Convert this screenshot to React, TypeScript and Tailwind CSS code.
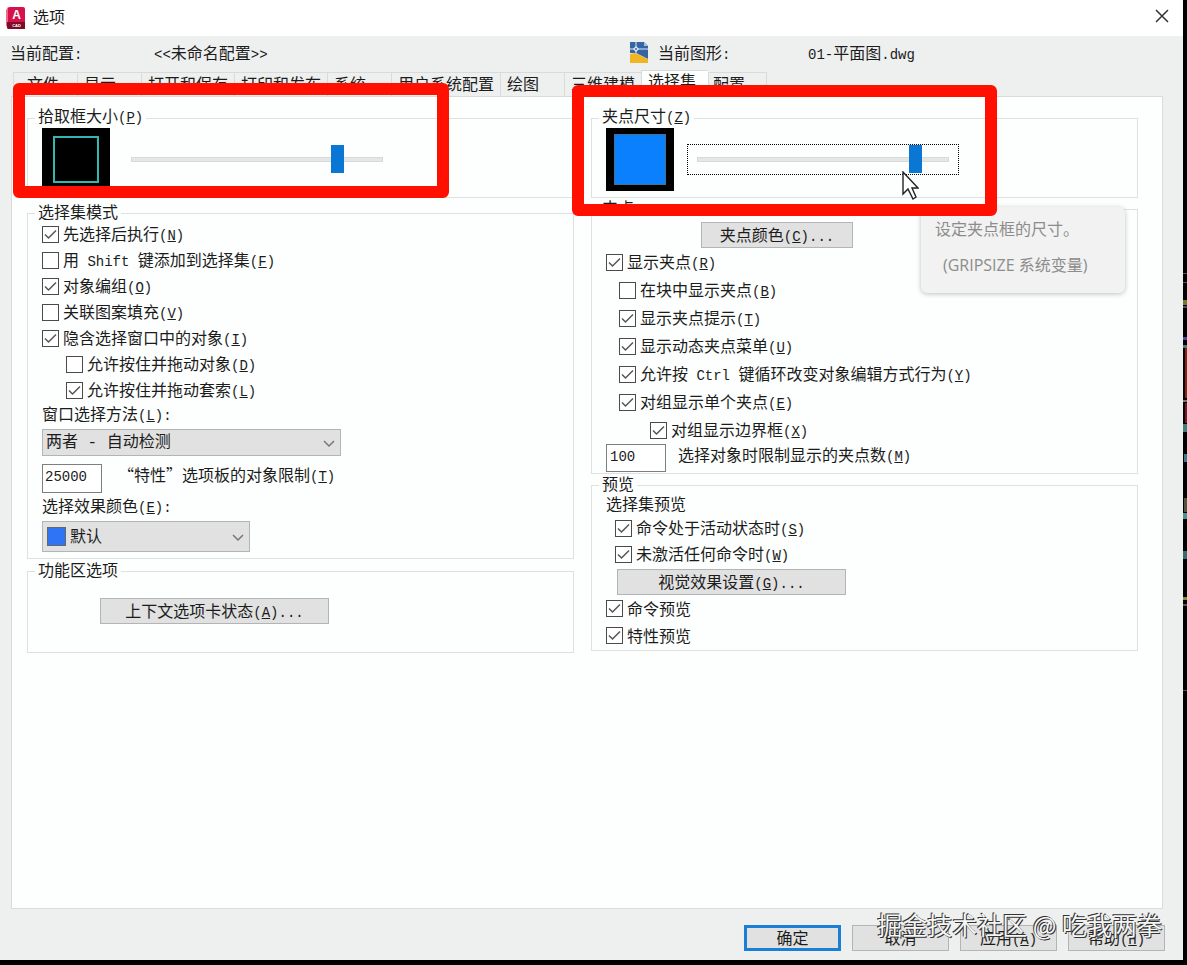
import React, { useState } from 'react'
import { clsx } from 'clsx'

const tabs = [
  '文件',
  '显示',
  '打开和保存',
  '打印和发布',
  '系统',
  '用户系统配置',
  '绘图',
  '三维建模',
  '选择集',
  '配置'
]

interface CheckItem {
  label: string
  checked: boolean
  indent?: string
}

const selectionModes: CheckItem[] = [
  { label: '先选择后执行(&N)', checked: true },
  { label: '用 Shift 键添加到选择集(&F)', checked: false },
  { label: '对象编组(&O)', checked: true },
  { label: '关联图案填充(&V)', checked: false },
  { label: '隐含选择窗口中的对象(&I)', checked: true },
  { label: '允许按住并拖动对象(&D)', checked: false, indent: 'ml-6' },
  { label: '允许按住并拖动套索(&L)', checked: true, indent: 'ml-6' }
]

const gripOptions: CheckItem[] = [
  { label: '显示夹点(&R)', checked: true },
  { label: '在块中显示夹点(&B)', checked: false, indent: 'ml-[13px]' },
  { label: '显示夹点提示(&T)', checked: true, indent: 'ml-[13px]' },
  { label: '显示动态夹点菜单(&U)', checked: true, indent: 'ml-[13px]' },
  { label: '允许按 Ctrl 键循环改变对象编辑方式行为(&Y)', checked: true, indent: 'ml-[13px]' },
  { label: '对组显示单个夹点(&E)', checked: true, indent: 'ml-[13px]' },
  { label: '对组显示边界框(&X)', checked: true, indent: 'ml-11' }
]

const previewStates: CheckItem[] = [
  { label: '命令处于活动状态时(&S)', checked: true, indent: 'ml-[9px]' },
  { label: '未激活任何命令时(&W)', checked: true, indent: 'ml-[9px]' }
]

const previewKinds: CheckItem[] = [
  { label: '命令预览', checked: true },
  { label: '特性预览', checked: true }
]

// Latin runs are set half as wide as the Chinese glyphs, "&" marks the access key
const Caption: React.FC<{ text: string }> = ({ text }) => (
  <>
    {text.split(/([\x20-\x7e]+)/).map((run, i) => {
      if (i % 2 === 0) return run
      const [before, after] = run.split('&')
      return (
        <span
          key={i}
          className="whitespace-pre font-['Liberation_Mono',monospace] text-[14px] leading-none"
        >
          {before}
          {after && (
            <>
              <u>{after[0]}</u>
              {after.slice(1)}
            </>
          )}
        </span>
      )
    })}
  </>
)

const Check: React.FC<{ item: CheckItem; height: string }> = ({ item, height }) => {
  const [checked, setChecked] = useState(item.checked)

  return (
    <label className={clsx('flex w-fit items-center gap-1 whitespace-nowrap', height, item.indent)}>
      <span className="relative flex size-[17px] shrink-0">
        <input
          type="checkbox"
          checked={checked}
          onChange={e => setChecked(e.target.checked)}
          className="size-[17px] appearance-none border border-[#4a4a4a] bg-white"
        />
        {checked && (
          <svg viewBox="0 0 17 17" className="pointer-events-none absolute inset-0 size-[17px]">
            <path d="M3 8.5l3.5 3.5 7.5-7.5" fill="none" stroke="#555" strokeWidth="1.5" />
          </svg>
        )}
      </span>
      <span className="pb-[2px] leading-5">
        <Caption text={item.label} />
      </span>
    </label>
  )
}

const Group: React.FC<{ title: string; className?: string; children: React.ReactNode }> = ({
  title,
  className,
  children
}) => (
  <fieldset className={clsx('min-w-0 border border-[#dfe1e0] pl-[14px]', className)}>
    <legend className="-ml-[7px] px-[3px] pb-[3px] leading-[13px]">
      <Caption text={title} />
    </legend>
    {children}
  </fieldset>
)

const PushButton: React.FC<{ text: string; className?: string }> = ({ text, className }) => (
  <button
    type="button"
    className={clsx(
      'block h-[26px] border border-[#b3b5b4] bg-[#e0e1e0] pb-[3px] text-center leading-5 whitespace-nowrap',
      className
    )}
  >
    <Caption text={text} />
  </button>
)

const SizeSlider: React.FC<{ label: string; value: number; focused?: boolean }> = ({
  label,
  value,
  focused
}) => {
  const [size, setSize] = useState(value)

  return (
    <div
      className={clsx(
        'flex h-[31px] w-[272px] items-center border border-dotted px-[9px]',
        focused ? 'border-black' : 'border-transparent'
      )}
    >
      <input
        type="range"
        aria-label={label}
        min={0}
        max={100}
        value={size}
        onChange={e => setSize(Number(e.target.value))}
        className="h-[29px] w-full appearance-none bg-transparent outline-none [&::-webkit-slider-runnable-track]:h-[5px] [&::-webkit-slider-runnable-track]:border [&::-webkit-slider-runnable-track]:border-[#d8dad9] [&::-webkit-slider-runnable-track]:bg-[#e5e7e6] [&::-webkit-slider-thumb]:-mt-[13px] [&::-webkit-slider-thumb]:h-[28px] [&::-webkit-slider-thumb]:w-[13px] [&::-webkit-slider-thumb]:appearance-none [&::-webkit-slider-thumb]:bg-[#0a77d5]"
      />
    </div>
  )
}

const Chevron: React.FC = () => (
  <svg viewBox="0 0 12 8" className="pointer-events-none absolute top-1/2 right-[6px] -mt-[3px] h-2 w-3">
    <path d="M1 1l5 5 5-5" fill="none" stroke="#777" strokeWidth="1.5" />
  </svg>
)

const AppIcon: React.FC = () => (
  <svg viewBox="0 0 20 22" className="h-[22px] w-5">
    <path d="M2 1Q2 0 4 0h13q2 0 2 2v20H3q-2 0-2-2z" fill="#d5124b" />
    <path d="M0 3l2-3v17l-2 3z" fill="#f06a8d" />
    <path d="M1 15h18v7H3q-2 0-2-2z" fill="#7d0c2b" />
    <text x="10.5" y="12" textAnchor="middle" fontSize="12" fontWeight="700" fill="#fff" fontFamily="Liberation Sans, sans-serif">A</text>
    <text x="10.5" y="20" textAnchor="middle" fontSize="4" fontWeight="700" fill="#fff" fontFamily="Liberation Sans, sans-serif">CAD</text>
  </svg>
)

const DrawingIcon: React.FC = () => (
  <svg viewBox="0 0 20 22" className="h-[22px] w-5">
    <path d="M1 1h14l4 4v13L7 12H1z" fill="#3566a3" />
    <path d="M15 1l4 4h-4z" fill="#a9c0dc" />
    <path d="M1 13l5-1 13 6v4H1z" fill="#efb522" />
    <path d="M0 8h19M7 1v11" stroke="#dce9f7" strokeWidth="1" />
    <path d="M7 5l3 3-3 3-3-3z" fill="#dce9f7" />
    <circle cx="7" cy="8" r="1" fill="#3566a3" />
  </svg>
)

// Sliver of the drawing window that shows beside the dialog
const CanvasEdge: React.FC = () => (
  <svg viewBox="0 0 4 965" className="absolute top-0 right-0 h-[965px] w-1">
    <rect width="4" height="965" fill="#000" />
    <rect y="273" width="4" height="1" fill="#555" />
    <rect y="282" width="4" height="1" fill="#555" />
    <rect y="300" width="4" height="5" fill="#77772a" />
    <rect y="306" width="4" height="2" fill="#45457a" />
    <rect y="337" width="4" height="3" fill="#4a4a90" />
    <rect y="345" width="4" height="3" fill="#3f7c7c" />
    <rect x="2" y="348" width="2" height="50" fill="#8a1f12" />
    <rect y="400" width="4" height="2" fill="#777" />
    <rect x="2" y="403" width="2" height="20" fill="#7a1428" />
    <rect y="424" width="4" height="8" fill="#3f7c7c" />
    <rect x="1" y="454" width="3" height="8" fill="#42768c" />
    <rect x="1" y="498" width="3" height="14" fill="#54513c" />
    <rect y="513" width="4" height="6" fill="#4b9292" />
    <rect y="551" width="4" height="8" fill="#396b6b" />
    <rect y="597" width="4" height="3" fill="#8a8a35" />
    <rect y="604" width="4" height="2" fill="#555" />
    <rect y="690" width="4" height="1" fill="#555" />
  </svg>
)

export default function App() {
  const [activeTab, setActiveTab] = useState('选择集')

  return (
    <div className="relative bg-black pr-1 pb-[5px] font-['Noto_Sans_CJK_SC',sans-serif] text-[16px] text-[#1c1c1c]">
      <CanvasEdge />
      <div className="relative flex min-h-[calc(100vh-5px)] flex-col bg-[#eef0ef]">
        {/* Title bar */}
        <header className="flex h-9 items-center bg-white pr-[14px] pl-[6px]">
          <AppIcon />
          <h1 className="ml-[7px] flex-1 pb-1 leading-7">选项</h1>
          <button type="button" aria-label="关闭" className="mb-1">
            <svg viewBox="0 0 14 14" className="size-[14px]">
              <path d="M1 1l12 12M13 1L1 13" stroke="#333" strokeWidth="1.5" />
            </svg>
          </button>
        </header>

        {/* Profile and drawing */}
        <div className="grid h-[34px] grid-cols-[619fr_554fr] items-center pb-[2px] pl-[10px] whitespace-nowrap">
          <div className="flex">
            <span className="w-36">
              <Caption text="当前配置:" />
            </span>
            <span>
              <Caption text="<<未命名配置>>" />
            </span>
          </div>
          <div className="flex items-center">
            <DrawingIcon />
            <span className="ml-[9px] w-[150px]">
              <Caption text="当前图形:" />
            </span>
            <span>
              <Caption text="01-平面图.dwg" />
            </span>
          </div>
        </div>

        {/* Tabs */}
        <div role="tablist" className="flex items-end pl-[13px]">
          {tabs.map(tab => (
            <button
              key={tab}
              type="button"
              role="tab"
              aria-selected={tab === activeTab}
              onClick={() => setActiveTab(tab)}
              className={clsx(
                'shrink-0 border-t border-l border-[#d9dbda] px-[6px] text-left leading-[18px] whitespace-nowrap first:pl-[13px]',
                tab === activeTab
                  ? 'h-[26px] min-w-[67px] bg-[#fdfffe] pb-[7px]'
                  : 'h-6 min-w-16 pb-1 last:min-w-[59px] last:border-r last:pl-1'
              )}
            >
              {tab}
            </button>
          ))}
        </div>

        <main className="mr-5 ml-[11px] grid flex-1 grid-cols-2 content-start gap-x-[17px] border border-[#d9dbda] bg-[#fdfffe] pt-3 pr-6 pl-[15px]">
          <div className="flex min-w-0 flex-col">
            <div className="relative">
              <Group title="拾取框大小(&P)" className="h-[89px]">
                <div className="flex items-center gap-[11px]">
                  <div className="h-[63px] w-[68px] bg-black px-[11px] py-2">
                    <div className="h-[47px] border-2 border-[#35b5b0]" />
                  </div>
                  <SizeSlider label="拾取框大小" value={84} />
                </div>
              </Group>
              <div className="pointer-events-none absolute -top-[26px] -left-[14px] z-20 h-[115px] w-[436px] rounded-md border-[12px] border-[#ff1000]" />
            </div>

            <Group title="选择集模式" className="mt-[7px] pb-[6px]">
              {selectionModes.map(item => (
                <Check key={item.label} item={item} height="h-[26px]" />
              ))}
              <label htmlFor="window-method" className="block h-6 leading-5">
                <Caption text="窗口选择方法(&L):" />
              </label>
              <div className="relative mt-[2px] w-[299px]">
                <select
                  id="window-method"
                  className="block h-[27px] w-full appearance-none border border-[#b3b5b4] bg-[#e0e1e0] pl-[3px] font-['Liberation_Mono','Noto_Sans_CJK_SC',monospace]"
                >
                  <option>两者 - 自动检测</option>
                </select>
                <Chevron />
              </div>
              <div className="mt-2 flex items-start gap-4">
                <input
                  id="palette-limit"
                  defaultValue="25000"
                  className="h-[29px] w-[60px] border border-[#7d7f7e] bg-white px-[2px] pb-[3px] font-['Liberation_Mono',monospace] text-[14px]"
                />
                <label htmlFor="palette-limit" className="leading-5 whitespace-nowrap">
                  <Caption text="“特性”选项板的对象限制(&T)" />
                </label>
              </div>
              <label htmlFor="effect-color" className="block h-7 leading-6">
                <Caption text="选择效果颜色(&E):" />
              </label>
              <div className="relative w-[208px]">
                <select
                  id="effect-color"
                  className="block h-[31px] w-full appearance-none border border-[#b3b5b4] bg-[#e0e1e0] pb-[3px] pl-[27px]"
                >
                  <option>默认</option>
                </select>
                <span className="pointer-events-none absolute top-[6px] left-[5px] size-[19px] border border-[#666] bg-[#2f74f5]" />
                <Chevron />
              </div>
            </Group>

            <Group title="功能区选项" className="mt-1 h-[90px]">
              <PushButton text="上下文选项卡状态(&A)..." className="mt-[19px] ml-[58px] w-[229px]" />
            </Group>
          </div>

          <div className="flex min-w-0 flex-col">
            <div className="relative">
              <Group title="夹点尺寸(&Z)" className="h-[89px]">
                <div className="flex items-center gap-[13px]">
                  <div className="h-[63px] w-[68px] bg-black px-2 py-[6px]">
                    <div className="h-[51px] border border-[#4a6f95] bg-[#0a80ff]" />
                  </div>
                  <SizeSlider label="夹点尺寸" value={89} focused />
                </div>
              </Group>
              <div className="pointer-events-none absolute -top-[24px] -left-[19px] z-20 h-[131px] w-[425px] rounded-md border-[12px] border-[#ff1000]" />
              <svg viewBox="0 0 17 30" className="pointer-events-none absolute top-[62px] left-[311px] z-30 h-[30px] w-[17px]">
                <path d="M1 1v22l5-5 5 10 3-2-4-9h6z" fill="#fff" stroke="#222" strokeWidth="1.4" />
              </svg>
              <div
                role="tooltip"
                className="absolute top-[98px] left-[330px] z-10 h-[86px] w-[204px] rounded-md bg-[#f1f2f1] px-[14px] pt-1 font-['Open_Sans','Noto_Sans_CJK_SC',sans-serif] leading-9 whitespace-nowrap text-[#8c8c8c] shadow-[0_1px_5px_rgba(0,0,0,0.25)]"
              >
                <p>设定夹点框的尺寸。</p>
                <p className="pl-2">(GRIPSIZE 系统变量)</p>
              </div>
            </div>

            <Group title="夹点" className="mt-[3px] pb-px">
              <PushButton text="夹点颜色(&C)..." className="mt-[5px] ml-[95px] w-[152px]" />
              {gripOptions.map(item => (
                <Check key={item.label} item={item} height="h-7" />
              ))}
              <div className="flex items-start gap-3">
                <input
                  id="grip-limit"
                  defaultValue="100"
                  className="h-[28px] w-[60px] border border-[#7d7f7e] bg-white px-[3px] pb-[3px] font-['Liberation_Mono',monospace] text-[14px]"
                />
                <label htmlFor="grip-limit" className="leading-5 whitespace-nowrap">
                  <Caption text="选择对象时限制显示的夹点数(&M)" />
                </label>
              </div>
            </Group>

            <Group title="预览" className="mt-[3px] pb-px">
              <p className="h-[22px] leading-5">选择集预览</p>
              {previewStates.map(item => (
                <Check key={item.label} item={item} height="h-[26px]" />
              ))}
              <PushButton text="视觉效果设置(&G)..." className="mt-[2px] ml-[11px] w-[229px]" />
              {previewKinds.map(item => (
                <Check key={item.label} item={item} height="h-[27px]" />
              ))}
            </Group>
          </div>
        </main>

        <footer className="relative flex justify-end gap-[11px] pt-4 pr-[18px] pb-[9px]">
          <button
            type="button"
            className="h-[26px] w-[97px] border-[3px] border-[#1c7fd6] bg-[#e0e1e0] pb-[3px] leading-4"
          >
            确定
          </button>
          <PushButton text="取消" className="w-[97px]" />
          <PushButton text="应用(&A)" className="w-[97px]" />
          <PushButton text="帮助(&H)" className="w-[97px]" />
          <span className="pointer-events-none absolute top-0 right-[21px] text-[25px] leading-[30px] whitespace-nowrap text-[#f4f5f4] [text-shadow:1px_1px_0_#333,-1px_-1px_0_#333]">
            掘金技术社区 @ 吃我两拳
          </span>
        </footer>
      </div>
    </div>
  )
}
